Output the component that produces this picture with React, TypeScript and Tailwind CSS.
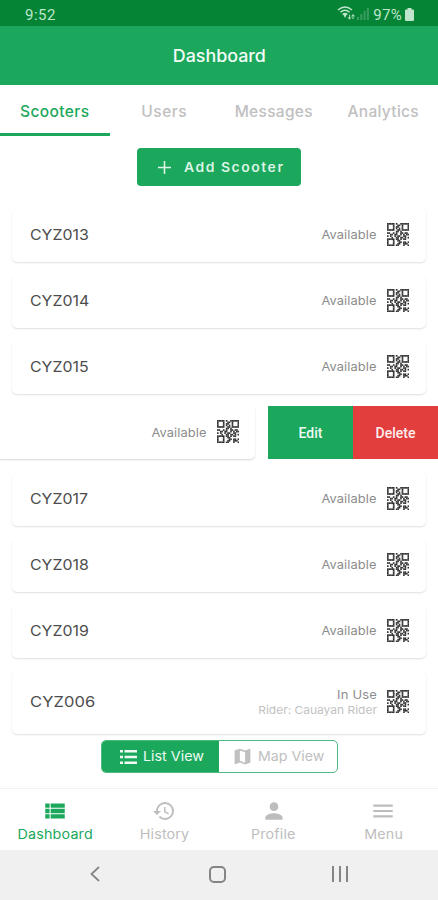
import type { ReactNode } from "react";
import { MdHistory, MdMap, MdMenu, MdPerson, MdViewList } from "react-icons/md";

const QR_ROWS = [
  "111110100111111",
  "100010011010001",
  "100010110010001",
  "100010101010001",
  "111110011011111",
  "000000110100000",
  "110010100110110",
  "001101100101011",
  "101001011001100",
  "000100110110101",
  "111110110101100",
  "100010011000000",
  "100010001101101",
  "100010011001110",
  "111110110001001",
];

function QrCode() {
  return (
    <svg viewBox="0 0 15 15" className="mb-[2px] h-[23px] w-[22px] shrink-0" preserveAspectRatio="none" fill="#333">
      {QR_ROWS.map((row, y) =>
        row.split("").map((c, x) => (c === "1" ? <rect key={`${x}-${y}`} x={x} y={y} width="1.1" height="1.1" /> : null)),
      )}
    </svg>
  );
}

function Card({ id, rider }: { id: string; rider?: string }) {
  return (
    <div
      className={`mx-3 flex shrink-0 items-center rounded-[5px] bg-white pr-[17px] pl-[18px] shadow-[0_1px_2px_rgba(0,0,0,0.13)] ${rider ? "h-[63px]" : "h-[53px]"}`}
    >
      <span className="flex-1 pb-px text-[15px] text-[#4d4d4d]">
        <span className={`inline-block origin-left ${rider ? "scale-x-[1.1] tracking-[0.1px]" : "scale-x-[1.06]"}`}>{id}</span>
      </span>
      <div className="mr-[10px] flex flex-col items-end pb-px">
        {rider ? (
          <>
            <span className="origin-right scale-x-[1.08] text-[12px] leading-4 tracking-[0.2px] text-[#8d8d8d]">In Use</span>
            <span className="origin-right scale-x-[1.09] text-[11px] leading-[15px] text-[#c2c2c2]">Rider: {rider}</span>
          </>
        ) : (
          <span className="origin-right scale-x-[1.07] pb-px text-[12px] tracking-[0.1px] text-[#8c8c8c]">Available</span>
        )}
      </div>
      <QrCode />
    </div>
  );
}

function SwipedRow() {
  return (
    <div className="-mt-px mb-px flex h-[53px] shrink-0">
      <div className="mr-[13px] flex flex-1 items-center justify-end rounded-r-[5px] bg-white pr-[16px] shadow-[0_1px_2px_rgba(0,0,0,0.16)]">
        <span className="mr-[10px] origin-right scale-x-[1.07] text-[12px] tracking-[0.1px] text-[#8c8c8c]">Available</span>
        <QrCode />
      </div>
      <button className="w-[85px] bg-[#1ba85c] pt-px font-['Roboto',sans-serif] text-[14px] font-medium text-[#eefaf3]">Edit</button>
      <button className="w-[85px] bg-[#e33e3e] pt-px font-['Roboto',sans-serif] text-[14px] font-medium text-[#fdeeee]">Delete</button>
    </div>
  );
}

function NavItem({ icon, active, children }: { icon: ReactNode; active?: boolean; children: ReactNode }) {
  return (
    <div className={`flex flex-1 flex-col items-center pt-[10px] ${active ? "text-[#1ba85c]" : "text-[#bdbdbd]"}`}>
      <span className="flex h-6 items-center">{icon}</span>
      <span className="mt-px scale-x-[1.1] text-[13px] leading-5 tracking-[0.15px]">{children}</span>
    </div>
  );
}

export default function App() {
  return (
    <div className="flex h-[900px] w-[438px] flex-col overflow-hidden bg-white font-['Inter',sans-serif]">
      <div className="flex h-[26px] shrink-0 items-center bg-[#048434] pr-[24px] pl-[25px] font-['Roboto',sans-serif] text-[#bfe6cc]">
        <span className="flex-1 pt-[4px] text-[15px] tracking-[0.5px]">9:52</span>
        <svg viewBox="0 0 18 16" className="h-4 w-[18px]" fill="none" stroke="currentColor" strokeWidth="1.4">
          <path d="M1 5Q8 -1 15 5M3.4 7.3Q8 3.2 12.6 7.3M5.6 9.5Q8 7.4 10.4 9.5" />
          <path d="M6 9h4L8 13z" fill="currentColor" stroke="none" />
          <path d="M12.5 14V9.8M11 12.4l1.5 1.8L14 12.4M16 9.8V14M14.5 11.4L16 9.6l1.5 1.8" strokeWidth="1" />
        </svg>
        <svg viewBox="0 0 12 12" className="mt-[2px] ml-[2px] h-3 w-3" fill="#3a9c5f">
          <path d="M0 9h2v3H0zM3.3 6h2v6h-2zM6.6 3h2v9h-2zM9.9 0h2v12h-2z" />
        </svg>
        <span className="mr-[3px] ml-[4px] pt-[4px] text-[15px] tracking-[0.3px]">97%</span>
        <svg viewBox="0 0 9 13" className="mt-[2px] h-[13px] w-[9px]" fill="currentColor">
          <path d="M2.5 0h4v1.5H8a1 1 0 0 1 1 1V12a1 1 0 0 1-1 1H1a1 1 0 0 1-1-1V2.5a1 1 0 0 1 1-1h1.5z" />
        </svg>
      </div>
      <header className="flex h-[59px] shrink-0 items-center justify-center bg-[#1ba85c] text-[17px] font-medium text-[#f3fcf7]">
        <span className="scale-x-[1.05] pt-[2px]">Dashboard</span>
      </header>
      <nav className="grid h-[51px] shrink-0 grid-cols-4 text-center text-[15.5px] leading-[53px] font-medium tracking-[0.3px] text-[#c0c0c0]">
        <span className="h-[51px] border-b-[3px] border-[#1ba85c] tracking-[0.4px] text-[#1ba85c]">Scooters</span>
        <span className="h-[51px] tracking-[0.5px]">Users</span>
        <span className="h-[51px]">Messages</span>
        <span className="h-[51px]">Analytics</span>
      </nav>
      <button className="mt-3 flex h-[38px] w-[164px] shrink-0 items-center self-center rounded-[4px] bg-[#1ba85c] pl-[21px] text-[13px] font-semibold text-[#dcf4e6]">
        <svg viewBox="0 0 13 13" className="mr-[13px] h-[13px] w-[13px]" fill="none" stroke="currentColor" strokeWidth="1.6">
          <path d="M6.5 0v13M0 6.5h13" />
        </svg>
        <span className="origin-left scale-x-[1.07] pt-px tracking-[1.45px]">Add Scooter</span>
      </button>
      <main className="mt-[23px] flex h-[529px] shrink-0 flex-col gap-[13px]">
        <Card id="CYZ013" />
        <Card id="CYZ014" />
        <Card id="CYZ015" />
        <SwipedRow />
        <Card id="CYZ017" />
        <Card id="CYZ018" />
        <Card id="CYZ019" />
        <Card id="CYZ006" rider="Cauayan Rider" />
      </main>
      <div className="mt-[2px] flex h-[33px] w-[237px] shrink-0 self-center overflow-hidden rounded-[5px] border border-[#4cba7f] text-[13.5px]">
        <div className="flex w-[117px] items-center bg-[#1ba85c] pl-[18px] text-[#effaf4]">
          <svg viewBox="0 0 17 14" className="mr-[6px] h-[14px] w-[17px]" fill="currentColor">
            <path d="M0 0h3v2.5H0zM4.5 0H17v2.5H4.5zM0 5.7h3v2.5H0zM4.5 5.7H17v2.5H4.5zM0 11.4h3v2.6H0zM4.5 11.4H17V14H4.5z" />
          </svg>
          <span className="origin-left scale-x-[1.06]">List View</span>
        </div>
        <div className="flex flex-1 items-center pl-[13px] text-[#c0c0c0]">
          <MdMap size={21} className="mr-[5px]" />
          <span className="origin-left scale-x-[1.05]">Map View</span>
        </div>
      </div>
      <footer className="mt-[15px] flex h-[62px] shrink-0 border-t border-[#f2f2f2]">
        <NavItem active icon={<MdViewList size={26} />}>Dashboard</NavItem>
        <NavItem icon={<MdHistory size={24} />}>History</NavItem>
        <NavItem icon={<MdPerson size={26} />}>Profile</NavItem>
        <NavItem icon={<MdMenu size={26} />}>Menu</NavItem>
      </footer>
      <div className="flex h-[50px] shrink-0 items-center bg-[#f0f0f0] pb-[2px] pl-[90px] text-[#858585]">
        <svg viewBox="0 0 10 16" className="h-4 w-[10px]" fill="none" stroke="currentColor" strokeWidth="1.8">
          <path d="M9 1L1.5 8L9 15" />
        </svg>
        <span className="ml-[109px] h-[17px] w-[17px] rounded-[5px] border-2 border-current" />
        <svg viewBox="0 0 16 16" className="ml-[106px] h-4 w-4" fill="currentColor">
          <path d="M0 0h2v16H0zM7 0h2v16H7zM14 0h2v16h-2z" />
        </svg>
      </div>
    </div>
  );
}
